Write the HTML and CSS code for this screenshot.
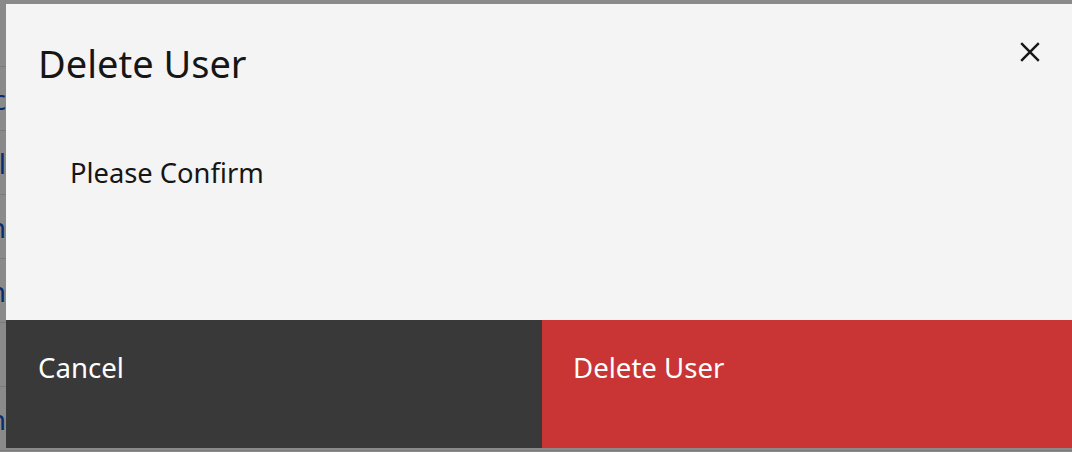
FILE: index.html
```html
<!DOCTYPE html>
<html lang="en">
<head>
<meta charset="utf-8">
<title>Delete User</title>
<link rel="stylesheet" href="styles.css">
</head>
<body>
<div class="page">
  <div class="table">
    <div class="row"><span class="cell"></span></div>
    <div class="row"><span class="cell"><span class="link">abc</span></span></div>
    <div class="row"><span class="cell"><span class="link">all</span></span></div>
    <div class="row"><span class="cell"><span class="link">admin</span></span></div>
    <div class="row"><span class="cell"><span class="link">admin</span></span></div>
    <div class="row"><span class="cell"></span></div>
    <div class="row"><span class="cell"><span class="link">admin</span></span></div>
  </div>
</div>
<div class="overlay"></div>
<div class="modal" role="dialog" aria-label="Delete User">
  <div class="modal-header">
    <h2 class="modal-title">Delete User</h2>
    <button class="modal-close" aria-label="Close">
      <svg width="20" height="20" viewBox="0 0 20 20" aria-hidden="true">
        <path d="M1.2 1.2 L18.8 18.8 M18.8 1.2 L1.2 18.8" stroke="#161616" stroke-width="2.4" fill="none"/>
      </svg>
    </button>
  </div>
  <div class="modal-body">
    <p class="modal-text">Please Confirm</p>
  </div>
  <div class="modal-footer">
    <button class="btn btn-secondary">Cancel</button>
    <button class="btn btn-danger">Delete User</button>
  </div>
</div>
</body>
</html>
```

FILE: styles.css
```css
html, body {
  margin: 0;
  padding: 0;
  width: 1072px;
  height: 452px;
  overflow: hidden;
  background: #ffffff;
  font-family: "Noto Sans", "Open Sans", sans-serif;
}

.page {
  height: 452px;
  background: #ffffff;
}

.table {
  display: flex;
  flex-direction: column;
  padding-top: 3px;
}

.row {
  height: 63px;
  border-bottom: 1px solid #e0e0e0;
  display: flex;
  align-items: center;
}

.cell {
  width: 6px;
  overflow: hidden;
  display: flex;
  justify-content: flex-end;
  white-space: nowrap;
}

.link {
  color: #0043ce;
  font-size: 28px;
}

.overlay {
  position: fixed;
  inset: 0;
  background: rgba(22, 22, 22, 0.5);
}

.modal {
  position: absolute;
  left: 6px;
  top: 4px;
  width: 1072px;
  height: 444px;
  background: #f4f4f4;
  display: flex;
  flex-direction: column;
}

.modal-header {
  display: flex;
  justify-content: space-between;
  align-items: flex-start;
}

.modal-title {
  margin: 0;
  padding: 31px 0 0 32px;
  font-size: 38px;
  line-height: 56px;
  font-weight: 400;
  color: #161616;
}

.modal-close {
  width: 96px;
  height: 96px;
  border: 0;
  padding: 0;
  background: transparent;
  display: flex;
  align-items: center;
  justify-content: center;
}

.modal-body {
  flex: 1;
  padding: 0 0 0 64px;
}

.modal-text {
  margin: 0;
  padding-top: 53px;
  font-size: 27.3px;
  line-height: 40px;
  color: #161616;
}

.modal-footer {
  height: 128px;
  display: flex;
}

.btn {
  flex: none;
  width: 50%;
  box-sizing: border-box;
  border: 0;
  margin: 0;
  font-family: inherit;
  font-size: 27.6px;
  line-height: 36px;
  padding: 29px 0 0 32px;
  color: #ffffff;
  display: flex;
  align-items: flex-start;
  justify-content: flex-start;
}

.btn-secondary {
  background: #393939;
}

.btn-danger {
  background: #c93535;
  padding-left: 31px;
}
```
